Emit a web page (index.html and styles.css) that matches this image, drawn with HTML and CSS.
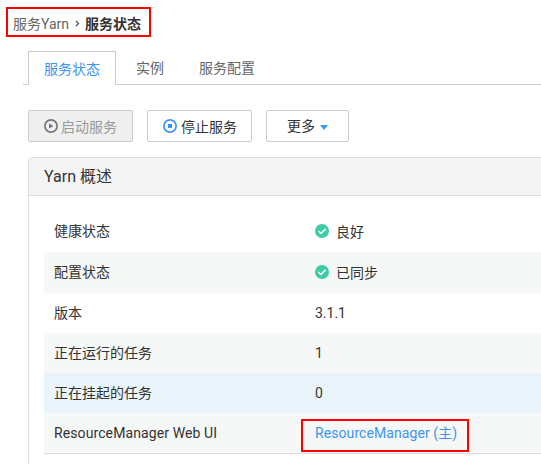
FILE: index.html
```html
<!DOCTYPE html>
<html lang="zh-CN">
<head>
<meta charset="utf-8">
<title>Yarn</title>
<link rel="stylesheet" href="styles.css">
</head>
<body>
<nav class="breadcrumb"><span>服务Yarn</span><svg class="chevron" width="5" height="7" viewBox="0 0 5 7"><path d="M1 1l2.5 2.5L1 6" fill="none" stroke="#555" stroke-width="1.3"/></svg><b>服务状态</b></nav>
<div class="tabs"><a class="tab active">服务状态</a><a class="tab">实例</a><a class="tab">服务配置</a></div>
<div class="toolbar">
<button class="btn disabled"><svg class="icon" width="14" height="14" viewBox="0 0 14 14"><circle cx="7" cy="7" r="6.1" fill="none" stroke="#777" stroke-width="1.7"/><path d="M5 4.5v5L9.5 7z" fill="#777"/></svg><span>启动服务</span></button>
<button class="btn"><svg class="icon" width="14" height="14" viewBox="0 0 14 14"><circle cx="7" cy="7" r="6.1" fill="none" stroke="#3d94f6" stroke-width="1.7"/><path d="M5 5h4v4H5z" fill="#3d94f6"/></svg><span>停止服务</span></button>
<button class="btn more"><span>更多</span><svg class="caret" width="8" height="5" viewBox="0 0 8 5"><path d="M0 0h8L4 5z" fill="#3399ff"/></svg></button>
</div>
<section class="panel">
<h2 class="panel-title">Yarn 概述</h2>
<div class="rows">
<div class="row tall"><span class="label">健康状态</span><span class="value"><svg class="status" width="14" height="14" viewBox="0 0 14 14"><circle cx="7" cy="7" r="7" fill="#3dcca6"/><path d="M3.5 7l2.5 2.5 4.6-4.6" fill="none" stroke="#fff" stroke-width="1.5"/></svg>良好</span></div>
<div class="row tall shaded"><span class="label">配置状态</span><span class="value"><svg class="status" width="14" height="14" viewBox="0 0 14 14"><circle cx="7" cy="7" r="7" fill="#3dcca6"/><path d="M3.5 7l2.5 2.5 4.6-4.6" fill="none" stroke="#fff" stroke-width="1.5"/></svg>已同步</span></div>
<div class="row"><span class="label">版本</span><span class="value">3.1.1</span></div>
<div class="row shaded"><span class="label">正在运行的任务</span><span class="value">1</span></div>
<div class="row hovered"><span class="label">正在挂起的任务</span><span class="value">0</span></div>
<div class="row shaded"><span class="label latin">ResourceManager Web UI</span><a class="value link">ResourceManager (主)</a></div>
</div>
</section>
</body>
</html>
```
FILE: styles.css
```css
* { box-sizing: border-box; }
body {
  margin: 0;
  width: 541px;
  height: 464px;
  overflow: hidden;
  background: #fff;
  color: #333;
  font: 14px/20px Roboto, "Noto Sans CJK SC", sans-serif;
}
.breadcrumb {
  display: flex;
  align-items: center;
  width: 145px;
  height: 30px;
  margin: 7px 0 0 6px;
  padding: 3px 0 0 5px;
  border: 2px solid #f00;
  color: #666;
  white-space: nowrap;
}
.breadcrumb b { color: #333; }
.chevron { margin: 0 5px 1px 6px; flex: none; }
.tabs {
  display: flex;
  height: 34px;
  margin: 14px 0 0 23px;
  padding-left: 5px;
  border-bottom: 1px solid #ccc;
}
.tab {
  height: 33px;
  padding: 7px 0 0 20px;
  color: #666;
  line-height: 20px;
}
.tab + .tab + .tab { padding-left: 35px; }
.tab.active {
  width: 88px;
  height: 34px;
  padding: 7px 0 0 15px;
  border: 1px solid #ccc;
  border-bottom: 0;
  background: #fff;
  color: #3d94f6;
}
.toolbar {
  display: flex;
  gap: 14px;
  margin: 25px 0 0 28px;
}
.btn {
  display: flex;
  align-items: center;
  width: 105px;
  height: 32px;
  padding: 2px 0 0 15px;
  border: 1px solid #ccc;
  border-radius: 2px;
  background: #fff;
  color: #333;
  font: inherit;
  white-space: nowrap;
}
.btn.disabled { background: #efefef; color: #999; }
.btn.disabled .icon { margin-right: 3px; }
.btn.more { width: 83px; padding: 0 0 0 20px; }
.icon { flex: none; margin: 0 4px 2px 0; }
.caret { flex: none; margin: 2px 0 0 5px; }
.panel {
  width: 530px;
  height: 320px;
  margin: 15px 0 0 28px;
  border: 1px solid #ddd;
  border-radius: 4px;
}
.panel-title {
  height: 38px;
  margin: 0;
  padding: 0 0 0 15px;
  border-bottom: 1px solid #ddd;
  border-radius: 3px 3px 0 0;
  background: #f4f4f4;
  font-size: 16px;
  font-weight: 400;
  line-height: 37px;
}
.rows { margin: 15px 0 0 15px; border-bottom: 1px solid #ddd; }
.row {
  display: flex;
  align-items: center;
  height: 40px;
  padding-left: 10px;
}
.row.tall { height: 41px; }
.row.tall .label { padding-bottom: 2px; }
.shaded { background: #f6f8f8; }
.hovered { background: #eaf5fb; }
.label { width: 261px; }
.label.latin { letter-spacing: 0.1px; }
.value { display: flex; align-items: center; }
.status { margin: 0 7px 2px 0; }
.link {
  width: 168px;
  height: 33px;
  margin: 5px 0 0 -14px;
  padding: 0 0 5px 12px;
  border: 2px solid #f00;
  color: #3d94f6;
  letter-spacing: 0.08px;
}
```
